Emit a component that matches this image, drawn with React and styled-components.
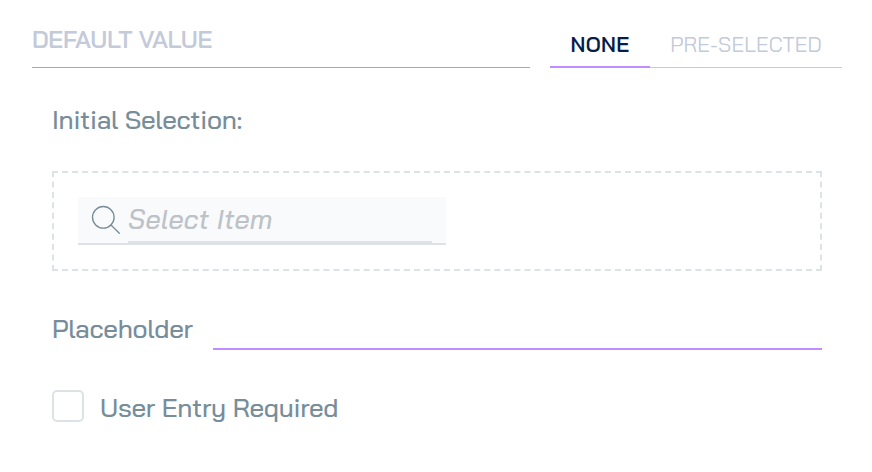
import React from "react";
import styled, { createGlobalStyle } from "styled-components";

const GlobalStyle = createGlobalStyle`
  * { box-sizing: border-box; }
  body { margin: 0; background: #fff; font-family: "Bai Jamjuree", Roboto, sans-serif; }
`;

const Panel = styled.main`
  width: 872px;
  height: 472px;
  padding: 20px 30px 0 32px;
  background: #fff;
  overflow: hidden;
`;

const Header = styled.header`
  display: flex;
  gap: 20px;
  height: 48px;
`;

const Title = styled.h2`
  flex: 1;
  margin: 0;
  border-bottom: 1px solid #c08cff;
  color: #c3cad9;
  font-size: 24px;
  font-weight: 600;
  line-height: 38px;
  letter-spacing: -0.3px;
  white-space: nowrap;
`;

const Tabs = styled.nav`
  display: flex;
  width: 292px;
`;

const Tab = styled.button`
  width: ${(p) => (p.$active ? 100 : 192)}px;
  padding: 1px 0 ${(p) => (p.$active ? 0 : 1)}px;
  border: 0;
  border-bottom: ${(p) => (p.$active ? "2px solid #c08cff" : "1px solid #c3cad9")};
  background: none;
  color: ${(p) => (p.$active ? "#071d49" : "#c3cad9")};
  font-family: inherit;
  font-size: 21px;
  font-weight: ${(p) => (p.$active ? 600 : 400)};
  letter-spacing: ${(p) => p.$spacing}px;
  white-space: nowrap;
`;

const Body = styled.section`
  display: flex;
  flex-direction: column;
  padding: 32px 20px 0;
`;

const Label = styled.span`
  color: #788d9a;
  font-size: 26px;
  font-weight: 500;
  line-height: 40px;
  letter-spacing: ${(p) => p.$spacing}px;
  white-space: nowrap;
`;

const DropZone = styled.div`
  height: 100px;
  margin-top: 31px;
  padding: 24px;
  border: 2px dashed #dde2e7;
`;

const SearchField = styled.div`
  display: flex;
  width: 368px;
  height: 48px;
  padding: 0 14px 0 12px;
  border-bottom: 2px solid #dde2e7;
  background: #f9fafc;
`;

const SearchIcon = styled.svg`
  flex: none;
  width: 38px;
  height: 46px;
  fill: none;
  stroke: #788d9a;
  stroke-width: 1.35;
  stroke-linecap: round;
`;

const SearchInput = styled.input`
  width: 304px;
  height: 46px;
  padding: 0;
  border: 0;
  border-bottom: 2px solid #dde2e7;
  outline: 0;
  background: none;
  font-family: inherit;
  font-size: 27px;
  font-style: italic;
  font-weight: 500;
  letter-spacing: 0.2px;
  &::placeholder { color: #bdc2c7; opacity: 1; }
`;

const PlaceholderRow = styled.label`
  display: flex;
  height: 41px;
  margin-top: 38px;
`;

const LabelCell = styled.span`
  display: flex;
  width: 161px;
`;

const TextInput = styled.input`
  flex: 1;
  min-width: 0;
  padding: 0;
  border: 0;
  border-bottom: 2px solid #c08cff;
  outline: 0;
  background: none;
`;

const CheckRow = styled.label`
  display: flex;
  align-items: center;
  gap: 16px;
  height: 42px;
  margin-top: 37px;
`;

const Checkbox = styled.input`
  appearance: none;
  width: 32px;
  height: 32px;
  margin: 0 0 4px;
  border: 2px solid #dde2e7;
  border-radius: 5px;
  background: #fff;
`;

export default function App() {
  return (
    <Panel>
      <GlobalStyle />
      <Header>
        <Title>DEFAULT VALUE</Title>
        <Tabs>
          <Tab $active $spacing={0.35}>NONE</Tab>
          <Tab $spacing={0.15}>PRE-SELECTED</Tab>
        </Tabs>
      </Header>
      <Body>
        <Label $spacing={-0.28}>Initial Selection:</Label>
        <DropZone>
          <SearchField>
            <SearchIcon viewBox="0 0 38 46">
              <circle cx="25.3" cy="20.3" r="10.8" transform="translate(-12 0)" />
              <path d="M21 28 29.3 36.2" />
            </SearchIcon>
            <SearchInput placeholder="Select Item" />
          </SearchField>
        </DropZone>
        <PlaceholderRow>
          <LabelCell><Label $spacing={-0.28}>Placeholder</Label></LabelCell>
          <TextInput />
        </PlaceholderRow>
        <CheckRow>
          <Checkbox type="checkbox" />
          <Label $spacing={-0.28}>User Entry Required</Label>
        </CheckRow>
      </Body>
    </Panel>
  );
}
